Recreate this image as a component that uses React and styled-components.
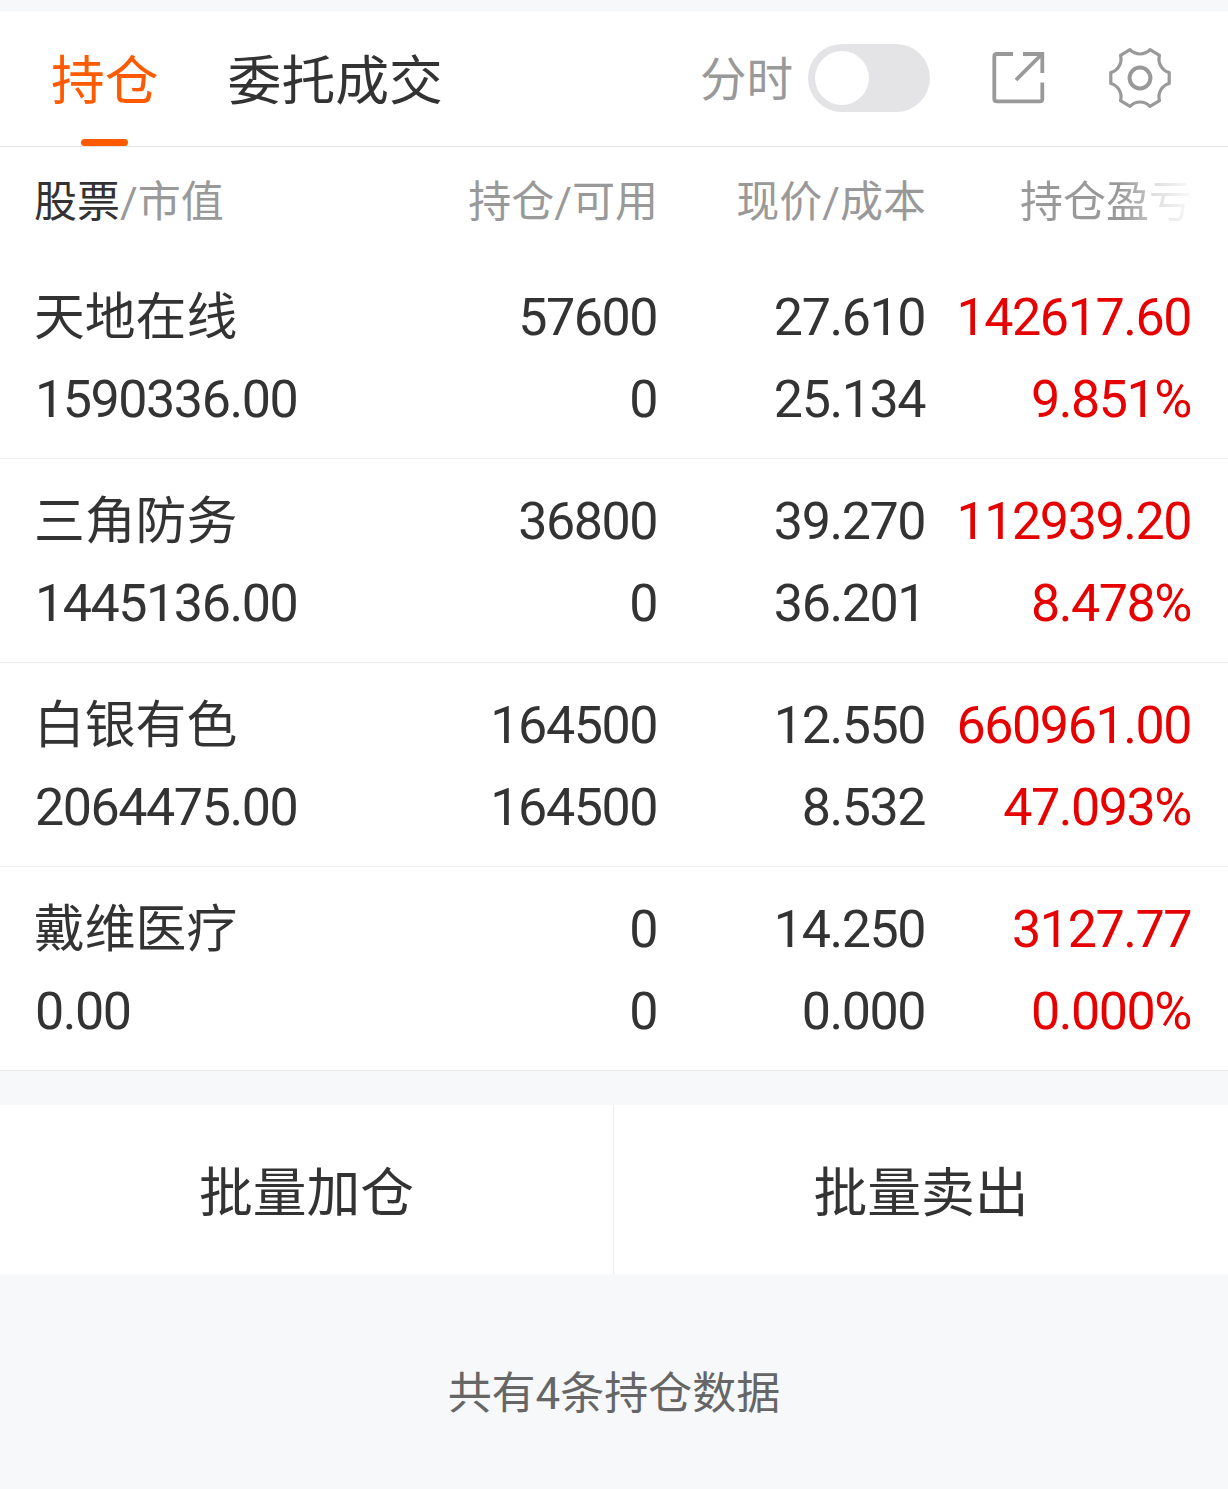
import React from 'react'
import styled, { createGlobalStyle } from 'styled-components'

const holdings = [
  {
    name: '天地在线',
    value: '1590336.00',
    held: '57600',
    available: '0',
    price: '27.610',
    cost: '25.134',
    profit: '142617.60',
    ratio: '9.851%',
  },
  {
    name: '三角防务',
    value: '1445136.00',
    held: '36800',
    available: '0',
    price: '39.270',
    cost: '36.201',
    profit: '112939.20',
    ratio: '8.478%',
  },
  {
    name: '白银有色',
    value: '2064475.00',
    held: '164500',
    available: '164500',
    price: '12.550',
    cost: '8.532',
    profit: '660961.00',
    ratio: '47.093%',
  },
  {
    name: '戴维医疗',
    value: '0.00',
    held: '0',
    available: '0',
    price: '14.250',
    cost: '0.000',
    profit: '3127.77',
    ratio: '0.000%',
  },
]

const ExportIcon = () => (
  <svg width="56" height="56" viewBox="0 0 56 56" fill="none" stroke="#999" strokeWidth="3.8">
    <path d="M23 4H7Q4.3 4 4.3 6.5V49Q4.3 51.3 7 51.3H50Q52.3 51.3 52.3 49V32.5" />
    <path d="M33 4H52.3V23M51.5 4.5L26 30" />
  </svg>
)

const GearIcon = () => (
  <svg width="64" height="64" viewBox="-32 -32 64 64" fill="none" stroke="#999">
    <path
      strokeWidth="3.2"
      strokeLinejoin="round"
      d="M-10 -28.3A13.8 13.8 0 0 0 10 -28.3L19.5 -22.6A13.8 13.8 0 0 0 29.2 -5.5V5.5A13.8 13.8 0 0 0 19.5 22.6L10 28.3A13.8 13.8 0 0 0 -10 28.3L-19.5 22.6A13.8 13.8 0 0 0 -29.2 5.5V-5.5A13.8 13.8 0 0 0 -19.5 -22.6Z"
    />
    <circle r="10.4" strokeWidth="4" />
  </svg>
)

const Holding = ({ item }) => (
  <Row>
    <Cell>
      <Name>{item.name}</Name>
      <Figure>{item.value}</Figure>
    </Cell>
    <Cell>
      <Figure>{item.held}</Figure>
      <Figure>{item.available}</Figure>
    </Cell>
    <Cell>
      <Figure>{item.price}</Figure>
      <Figure>{item.cost}</Figure>
    </Cell>
    <Cell $up>
      <Figure>{item.profit}</Figure>
      <Figure>{item.ratio}</Figure>
    </Cell>
  </Row>
)

export default function App() {
  return (
    <Page>
      <GlobalStyle />
      <TopBar>
        <Tab $active>持仓</Tab>
        <Tab>委托成交</Tab>
        <Tools>
          <SwitchLabel>分时</SwitchLabel>
          <Switch type="button" role="switch" aria-checked="false" aria-label="分时">
            <Knob />
          </Switch>
          <IconButton type="button" $gap={60}>
            <ExportIcon />
          </IconButton>
          <IconButton type="button" $gap={62}>
            <GearIcon />
          </IconButton>
        </Tools>
      </TopBar>
      <Head>
        <HeadCell>
          <strong>股票</strong>/市值
        </HeadCell>
        <HeadCell>持仓/可用</HeadCell>
        <HeadCell>现价/成本</HeadCell>
        <HeadCell>
          <Fade>持仓盈亏</Fade>
        </HeadCell>
      </Head>
      {holdings.map(item => (
        <Holding key={item.name} item={item} />
      ))}
      <Actions>
        <Action type="button">批量加仓</Action>
        <Action type="button">批量卖出</Action>
      </Actions>
      <Summary>共有4条持仓数据</Summary>
    </Page>
  )
}

// ------- STYLES -------
const GlobalStyle = createGlobalStyle`
  * {
    box-sizing: border-box;
  }

  body {
    margin: 0;
    background: #f7f8fa;
  }
`

const Page = styled.main`
  width: 1228px;
  min-height: 1489px;
  padding-top: 11px;
  background: #f7f8fa;
  color: #333;
  font-family: Roboto, 'Noto Sans CJK SC', sans-serif;
`

const TopBar = styled.header`
  display: flex;
  height: 136px;
  padding: 0 56px 0 51px;
  border-bottom: 1px solid #e3e3e3;
  background: #fff;
`

const Tab = styled.div`
  display: flex;
  flex-direction: column;
  align-items: center;
  margin-right: 69px;
  font-size: 53.8px;
  line-height: 142px;
  white-space: nowrap;
  color: ${({ $active }) => ($active ? '#ff5a00' : '#333')};

  &::after {
    content: '';
    width: 47px;
    height: 7px;
    margin-top: -14px;
    border-radius: 4px;
    background: ${({ $active }) => ($active ? '#ff5a00' : 'transparent')};
  }
`

const Tools = styled.div`
  display: flex;
  align-items: center;
  margin-left: auto;
  padding-bottom: 2px;
`

const SwitchLabel = styled.span`
  margin-right: 15px;
  padding-top: 4px;
  font-size: 46.5px;
  line-height: 130px;
  color: #999;
`

const ButtonBase = styled.button`
  padding: 0;
  border: 0;
  background: none;
  color: inherit;
  font-family: inherit;
`

const Switch = styled(ButtonBase)`
  display: flex;
  align-items: center;
  width: 122px;
  height: 68px;
  padding: 0 7px;
  border-radius: 34px;
  background: #e4e4e6;
`

const Knob = styled.span`
  width: 54px;
  height: 54px;
  border-radius: 50%;
  background: #fff;
`

const IconButton = styled(ButtonBase)`
  display: flex;
  margin-left: ${({ $gap }) => $gap}px;
`

const Columns = styled.div`
  display: grid;
  grid-template-columns: 1fr 260px 268px 266px;
  padding: 0 37px 0 35px;
  background: #fff;
`

const Head = styled(Columns)`
  height: 108px;
  padding: 1px 36px 0 34px;
  font-size: 43px;
  line-height: 108px;
  color: #999;
`

const HeadCell = styled.div`
  text-align: right;
  white-space: nowrap;

  &:first-child {
    text-align: left;
  }

  strong {
    font-weight: 400;
    color: #333;
  }
`

const Fade = styled.span`
  background: linear-gradient(90deg, #999 58%, #bbb 73%, #ddd 77%, #fff 104%);
  background-clip: text;
  color: transparent;
`

const Row = styled(Columns)`
  height: 204px;
  padding-top: 22px;
  border-bottom: 1px solid #ebecee;
`

const Cell = styled.div`
  text-align: right;
  line-height: 82px;
  color: ${({ $up }) => ($up ? '#e60000' : '#333')};

  &:first-child {
    text-align: left;
  }
`

const Name = styled.div`
  margin-left: -1px;
  font-size: 50.8px;
`

const Figure = styled.div`
  font-size: 52px;
  letter-spacing: -1.45px;
`

const Actions = styled.div`
  display: grid;
  grid-template-columns: 614px 614px;
  height: 169px;
  margin-top: 34px;
  background: #fff;
`

const Action = styled(ButtonBase)`
  padding-top: 8px;
  font-size: 53.8px;
  line-height: 161px;

  &:first-child {
    border-right: 1px solid #ebecee;
  }
`

const Summary = styled.footer`
  padding-top: 88px;
  font-size: 44px;
  line-height: 64px;
  text-align: center;
  color: #666;
`
